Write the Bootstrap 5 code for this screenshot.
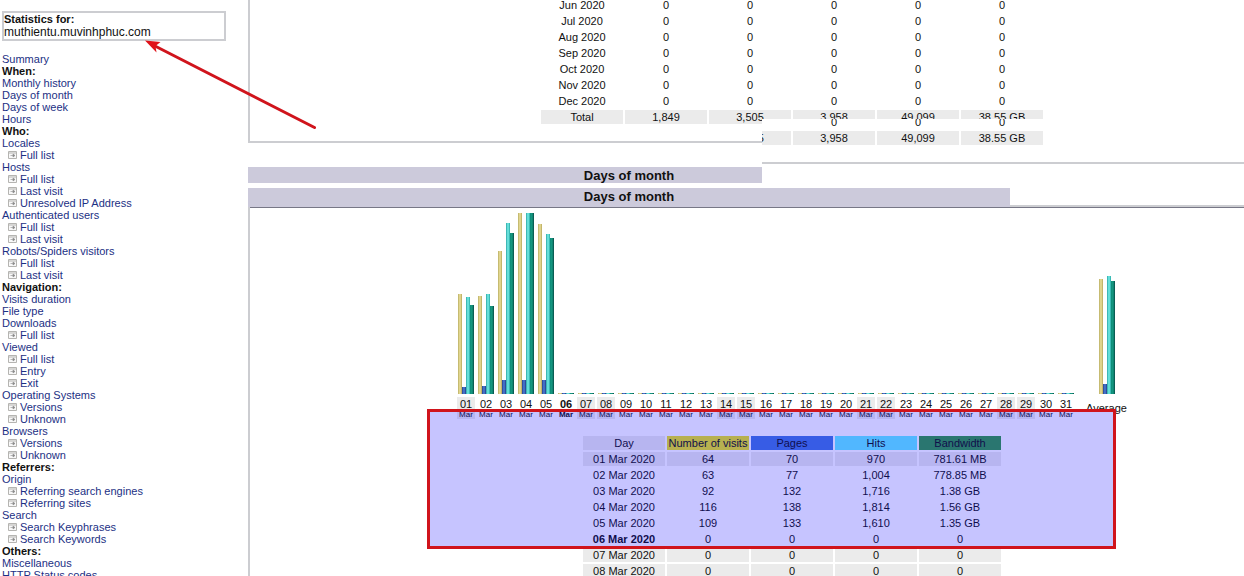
<!DOCTYPE html>
<html lang="en">
<head>
<meta charset="utf-8">
<meta name="viewport" content="width=device-width, initial-scale=1">
<title>Statistics for muthientu.muvinhphuc.com</title>
<link rel="stylesheet" href="https://cdn.jsdelivr.net/npm/bootstrap@5.3.0/dist/css/bootstrap.min.css">
<style>
body { font-family: "Liberation Sans", Arial, sans-serif; font-size: 11px; line-height: 12px; color: #111; background: #fff; }
a { color: #1c3084; text-decoration: none; }
.side { width: 248px; padding: 11px 22px 0 2px; }
.site-box { border: 2px solid #cccdd1; margin-bottom: 12px; }
.site-name { font-size: 12px; line-height: 14px; }
.side-nav li { height: 12px; white-space: nowrap; }
.side-nav .sub { padding-left: 6px; }
.side-nav .sub svg { width: 9px; height: 8px; margin-right: 3px; display: block; }
.side-nav .sub a { display: inline-flex; align-items: center; }
.stat { border-collapse: separate; border-spacing: 2px; table-layout: fixed; line-height: 14px; text-align: center; }
.stat th, .stat td { width: 82px; height: 14px; padding: 0; font-weight: 400; white-space: nowrap; }
.stat .shade > * { background: #ebebeb; }
.months-panel { height: 164px; }
.months-foot { display: flow-root; height: 143px; border-left: 2px solid #cccdd1; border-bottom: 2px solid #cccdd1; }
.months { margin: -4px 0 0 289px; width: 506px; }
.months-late { left: 514px; right: 0; top: 119px; height: 45px; background: #fff; border-bottom: 2px solid #cccdd1; }
.months-late .stat { margin: -6px 0 0 -55px; width: 338px; }
.title-bar { background: #cccadb; font-size: 13px; font-weight: 700; text-align: center; width: 762px; margin: 0; }
.title-clip { width: 514px; height: 16px; margin: 3px 0 5px; }
.title-clip .title-bar { line-height: 17px; }
.title-full { line-height: 18px; padding-bottom: 1px; }
.days-panel { border-left: 2px solid #cccdd1; }
.days-rule { border-top: 1px solid #777786; }
.rule-side { border-bottom: 2px solid #cccdd1; }
.chart { border-collapse: separate; border-spacing: 2px 0; margin: 5px 0 0 205px; table-layout: fixed; width: 674px; text-align: center; }
.chart td, .chart th { padding: 0; font-weight: 400; }
.chart .bars td { height: 181px; vertical-align: bottom; }
.chart .spacer td { height: 3px; }
.chart .labels th { height: 22px; line-height: 14px; }
.chart .labels small { display: block; font-size: 8px; line-height: 8px; }
.chart .labels .off { background: #ebebeb; }
.chart .labels .now { font-weight: 700; }
.d-col { width: 18px; } .g-col { width: 7px; } .a-col { width: 41px; }
.bar-set { display: flex; align-items: flex-end; justify-content: center; }
.bar-set span { width: 4px; flex: none; }
.b-v { background: linear-gradient(90deg, #b9ae63, #eee29c 50%, #b5a75a); }
.b-p { background: linear-gradient(90deg, #29408f, #4c7fd8 50%, #243a86); }
.b-h { background: linear-gradient(90deg, #2aa5a5, #79f0ea 50%, #27aaa5); }
.b-k { background: linear-gradient(90deg, #0d8b78, #159a82 50%, #064a45); }
.days { margin: 15px 0 0 331px; width: 422px; }
.stat .c-v { background: #ebe51a; } .stat .c-p { background: #4477dd; } .stat .c-h { background: #66eeff; } .stat .c-k { background: #339944; }
.highlight { left: 179px; width: 689px; top: 409px; height: 140px; border: 3px solid #d0141c; background: rgba(16, 8, 255, .24); }
.arrow { left: 140px; top: 34px; width: 180px; height: 100px; pointer-events: none; }
</style>
<script src="https://cdn.jsdelivr.net/npm/bootstrap@5.3.0/dist/js/bootstrap.bundle.min.js"></script>
</head>
<body class="vh-100 overflow-hidden position-relative">
<svg width="0" height="0" class="position-absolute" aria-hidden="true">
  <symbol id="frame" viewBox="0 0 9 8"><path d="M.5.5h8v7h-8zM.5 2h8" fill="#f8f8f8" stroke="#b5b4b1"/><path d="M2.500 4.500h3M5 3l2 1.500-2 1.500z" fill="#8c8c8c" stroke="#8c8c8c" stroke-width=".6"/></symbol>
</svg>
<div class="d-flex align-items-start">
  <aside class="side flex-shrink-0">
    <div class="site-box"><div class="fw-bold">Statistics for:</div><div class="site-name">muthientu.muvinhphuc.com</div></div>
    <nav aria-label="Reports">
      <ul class="side-nav list-unstyled mb-0">
        <li><a href="#">Summary</a></li>
        <li class="fw-bold">When:</li>
        <li><a href="#">Monthly history</a></li>
        <li><a href="#">Days of month</a></li>
        <li><a href="#">Days of week</a></li>
        <li><a href="#">Hours</a></li>
        <li class="fw-bold">Who:</li>
        <li><a href="#">Locales</a></li>
        <li class="sub"><a href="#"><svg><use href="#frame"/></svg>Full list</a></li>
        <li><a href="#">Hosts</a></li>
        <li class="sub"><a href="#"><svg><use href="#frame"/></svg>Full list</a></li>
        <li class="sub"><a href="#"><svg><use href="#frame"/></svg>Last visit</a></li>
        <li class="sub"><a href="#"><svg><use href="#frame"/></svg>Unresolved IP Address</a></li>
        <li><a href="#">Authenticated users</a></li>
        <li class="sub"><a href="#"><svg><use href="#frame"/></svg>Full list</a></li>
        <li class="sub"><a href="#"><svg><use href="#frame"/></svg>Last visit</a></li>
        <li><a href="#">Robots/Spiders visitors</a></li>
        <li class="sub"><a href="#"><svg><use href="#frame"/></svg>Full list</a></li>
        <li class="sub"><a href="#"><svg><use href="#frame"/></svg>Last visit</a></li>
        <li class="fw-bold">Navigation:</li>
        <li><a href="#">Visits duration</a></li>
        <li><a href="#">File type</a></li>
        <li><a href="#">Downloads</a></li>
        <li class="sub"><a href="#"><svg><use href="#frame"/></svg>Full list</a></li>
        <li><a href="#">Viewed</a></li>
        <li class="sub"><a href="#"><svg><use href="#frame"/></svg>Full list</a></li>
        <li class="sub"><a href="#"><svg><use href="#frame"/></svg>Entry</a></li>
        <li class="sub"><a href="#"><svg><use href="#frame"/></svg>Exit</a></li>
        <li><a href="#">Operating Systems</a></li>
        <li class="sub"><a href="#"><svg><use href="#frame"/></svg>Versions</a></li>
        <li class="sub"><a href="#"><svg><use href="#frame"/></svg>Unknown</a></li>
        <li><a href="#">Browsers</a></li>
        <li class="sub"><a href="#"><svg><use href="#frame"/></svg>Versions</a></li>
        <li class="sub"><a href="#"><svg><use href="#frame"/></svg>Unknown</a></li>
        <li class="fw-bold">Referrers:</li>
        <li><a href="#">Origin</a></li>
        <li class="sub"><a href="#"><svg><use href="#frame"/></svg>Referring search engines</a></li>
        <li class="sub"><a href="#"><svg><use href="#frame"/></svg>Referring sites</a></li>
        <li><a href="#">Search</a></li>
        <li class="sub"><a href="#"><svg><use href="#frame"/></svg>Search Keyphrases</a></li>
        <li class="sub"><a href="#"><svg><use href="#frame"/></svg>Search Keywords</a></li>
        <li class="fw-bold">Others:</li>
        <li><a href="#">Miscellaneous</a></li>
        <li><a href="#">HTTP Status codes</a></li>
      </ul>
    </nav>
  </aside>

  <main class="flex-grow-1 position-relative overflow-hidden">
    <section class="months-panel position-relative overflow-hidden">
      <div class="months-foot">
        <table class="stat months">
          <tbody>
            <tr><td>Jun 2020</td><td>0</td><td>0</td><td>0</td><td>0</td><td>0</td></tr>
            <tr><td>Jul 2020</td><td>0</td><td>0</td><td>0</td><td>0</td><td>0</td></tr>
            <tr><td>Aug 2020</td><td>0</td><td>0</td><td>0</td><td>0</td><td>0</td></tr>
            <tr><td>Sep 2020</td><td>0</td><td>0</td><td>0</td><td>0</td><td>0</td></tr>
            <tr><td>Oct 2020</td><td>0</td><td>0</td><td>0</td><td>0</td><td>0</td></tr>
            <tr><td>Nov 2020</td><td>0</td><td>0</td><td>0</td><td>0</td><td>0</td></tr>
            <tr><td>Dec 2020</td><td>0</td><td>0</td><td>0</td><td>0</td><td>0</td></tr>
            <tr class="shade"><td>Total</td><td>1,849</td><td>3,505</td><td>3,958</td><td>49,099</td><td>38.55 GB</td></tr>
          </tbody>
        </table>
      </div>
      <div class="months-late position-absolute overflow-hidden">
        <table class="stat">
          <tbody>
            <tr><td></td><td>0</td><td>0</td><td>0</td></tr>
            <tr class="shade"><td>3,505</td><td>3,958</td><td>49,099</td><td>38.55 GB</td></tr>
          </tbody>
        </table>
      </div>
    </section>

    <div class="title-clip overflow-hidden"><h2 class="title-bar">Days of month</h2></div>
    <div class="d-flex">
      <h2 class="title-bar title-full flex-shrink-0">Days of month</h2>
      <div class="rule-side flex-grow-1"></div>
    </div>
    <section class="days-panel">
      <div class="days-rule"></div>
      <table class="chart" id="chart">
        <colgroup><col span="31" class="d-col"><col class="g-col"><col class="a-col"></colgroup>
        <tbody><tr class="bars"></tr><tr class="spacer"><td colspan="33"></td></tr><tr class="labels"></tr></tbody>
      </table>
      <table class="stat days">
        <thead><tr class="shade"><th>Day</th><th class="c-v">Number of visits</th><th class="c-p">Pages</th><th class="c-h">Hits</th><th class="c-k">Bandwidth</th></tr></thead>
        <tbody>
          <tr class="shade"><td>01 Mar 2020</td><td>64</td><td>70</td><td>970</td><td>781.61 MB</td></tr>
          <tr><td>02 Mar 2020</td><td>63</td><td>77</td><td>1,004</td><td>778.85 MB</td></tr>
          <tr><td>03 Mar 2020</td><td>92</td><td>132</td><td>1,716</td><td>1.38 GB</td></tr>
          <tr><td>04 Mar 2020</td><td>116</td><td>138</td><td>1,814</td><td>1.56 GB</td></tr>
          <tr><td>05 Mar 2020</td><td>109</td><td>133</td><td>1,610</td><td>1.35 GB</td></tr>
          <tr><td class="fw-bold">06 Mar 2020</td><td>0</td><td>0</td><td>0</td><td>0</td></tr>
          <tr class="shade"><td>07 Mar 2020</td><td>0</td><td>0</td><td>0</td><td>0</td></tr>
          <tr class="shade"><td>08 Mar 2020</td><td>0</td><td>0</td><td>0</td><td>0</td></tr>
        </tbody>
      </table>
    </section>
    <div class="highlight position-absolute"></div>
  </main>
</div>
<svg class="arrow position-absolute" viewBox="0 0 180 100" aria-hidden="true">
  <path d="M14 11.500 174.500 93.500" stroke="#d0141c" stroke-width="3" stroke-linecap="round"/>
  <path d="M5 6.500 20.500 8 15.500 12 16.500 18.500z" fill="#e0121a"/>
</svg>
<script>
// Bar heights per day: visits, pages, hits, bandwidth
const bars = [[100,7,97,89],[98,8,100,88],[143,14,171,161],[181,14,181,181],[170,14,160,156]];
const average = [115,10,118,113];
const weekend = [1,7,8,14,15,21,22,28,29];
const kinds = ['b-v','b-p','b-h','b-k'];
const barCell = set => '<td><div class="bar-set">' + set.map((h, i) => `<span class="${kinds[i]}" style="height:${h}px"></span>`).join('') + '</div></td>';
let barRow = '', labelRow = '';
for (let d = 1; d <= 31; d++) {
  barRow += barCell(bars[d - 1] || [1,1,1,1]);
  const cls = weekend.includes(d) ? 'off' : d === 6 ? 'now' : '';
  labelRow += `<th class="${cls}">${String(d).padStart(2, '0')}<small>Mar</small></th>`;
}
document.querySelector('#chart .bars').innerHTML = barRow + '<td></td>' + barCell(average);
document.querySelector('#chart .labels').innerHTML = labelRow + '<td></td><th>Average</th>';
</script>
</body>
</html>
